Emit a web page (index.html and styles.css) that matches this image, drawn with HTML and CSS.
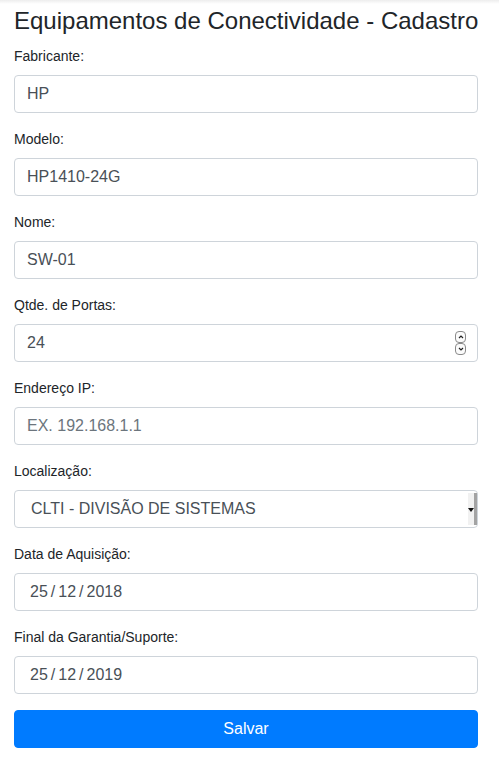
FILE: index.html
```html
<!DOCTYPE html>
<html lang="pt-BR">
<head>
<meta charset="utf-8">
<title>Equipamentos de Conectividade - Cadastro</title>
<link rel="stylesheet" href="styles.css">
</head>
<body>
<div class="page">
  <h3 class="title">Equipamentos de Conectividade - Cadastro</h3>
  <form class="form">
    <div class="group">
      <label class="label" for="fab">Fabricante:</label>
      <input class="control" id="fab" type="text" value="HP">
    </div>
    <div class="group">
      <label class="label" for="mod">Modelo:</label>
      <input class="control" id="mod" type="text" value="HP1410-24G">
    </div>
    <div class="group">
      <label class="label" for="nome">Nome:</label>
      <input class="control" id="nome" type="text" value="SW-01">
    </div>
    <div class="group">
      <label class="label" for="portas">Qtde. de Portas:</label>
      <div class="field">
        <input class="control number" id="portas" type="number" value="24">
        <span class="spinner">
          <span class="spin-btn"><svg viewBox="0 0 8 10" width="8" height="10"><path d="M2 6 L4 4 L6 6" fill="none" stroke="#222" stroke-width="1.2"/></svg></span>
          <span class="spin-btn"><svg viewBox="0 0 8 10" width="8" height="10"><path d="M2 4 L4 6 L6 4" fill="none" stroke="#222" stroke-width="1.2"/></svg></span>
        </span>
      </div>
    </div>
    <div class="group">
      <label class="label" for="ip">Endereço IP:</label>
      <input class="control" id="ip" type="text" placeholder="EX. 192.168.1.1">
    </div>
    <div class="group">
      <label class="label" for="loc">Localização:</label>
      <div class="field">
        <select class="control select" id="loc">
          <option>CLTI - DIVISÃO DE SISTEMAS</option>
        </select>
        <span class="drop"><span class="drop-arrow"></span></span>
      </div>
    </div>
    <div class="group">
      <label class="label">Data de Aquisição:</label>
      <div class="control date"><span>25</span><span class="sep">/</span><span>12</span><span class="sep">/</span><span>2018</span></div>
    </div>
    <div class="group">
      <label class="label">Final da Garantia/Suporte:</label>
      <div class="control date"><span>25</span><span class="sep">/</span><span>12</span><span class="sep">/</span><span>2019</span></div>
    </div>
    <button class="btn" type="button">Salvar</button>
  </form>
</div>
</body>
</html>
```

FILE: styles.css
```css
* { box-sizing: border-box; }

html, body {
  margin: 0;
  padding: 0;
}

body {
  font-family: "Liberation Sans", Arial, sans-serif;
  color: #212529;
  background: #fff linear-gradient(rgba(0,0,0,0.07), rgba(0,0,0,0) 4px) no-repeat;
  font-size: 16px;
  line-height: 1.5;
}

.page {
  width: 464px;
  margin-left: 14px;
  padding-top: 6px;
}

.title {
  font-size: 24px;
  font-weight: 400;
  line-height: 30px;
  margin: 0 0 10px;
  white-space: nowrap;
}

.form {
  margin: 0;
}

.group {
  margin-bottom: 16px;
}

.label {
  display: block;
  font-size: 14px;
  line-height: 21px;
  margin-bottom: 8px;
}

.field {
  position: relative;
}

.control {
  display: block;
  width: 100%;
  height: 38px;
  padding: 6px 12px;
  font-family: inherit;
  font-size: 16px;
  line-height: 24px;
  color: #495057;
  background: #fff;
  border: 1px solid #ced4da;
  border-radius: 4px;
  outline: none;
  margin: 0;
}

.control::placeholder {
  color: #6c757d;
  opacity: 1;
}

.number {
  -moz-appearance: textfield;
  appearance: textfield;
}

.number::-webkit-inner-spin-button,
.number::-webkit-outer-spin-button {
  -webkit-appearance: none;
  margin: 0;
}

.spinner {
  position: absolute;
  right: 12px;
  top: 7px;
  display: flex;
  flex-direction: column;
}

.spin-btn {
  display: flex;
  align-items: center;
  justify-content: center;
  width: 11px;
  height: 12px;
  border: 1px solid #8a8a8a;
  border-radius: 4px;
  background: #fbfbfb;
}

.select {
  -webkit-appearance: none;
  appearance: none;
  padding-left: 16px;
  color: #495057;
}

.drop {
  position: absolute;
  right: 1px;
  top: 3px;
  bottom: 3px;
  width: 9px;
  background: #f1f1f1;
  border-right: 3px solid #a3a3a3;
  display: flex;
  align-items: center;
  justify-content: center;
}

.drop-arrow {
  width: 0;
  height: 0;
  border-left: 3px solid transparent;
  border-right: 3px solid transparent;
  border-top: 4px solid #111;
  margin-top: 1px;
}

.date {
  display: flex;
  align-items: center;
  padding-left: 15px;
}

.sep {
  padding: 0 3px;
}

.btn {
  display: block;
  width: 100%;
  height: 38px;
  margin: 1px 0 0;
  padding: 6px 12px;
  font-family: inherit;
  font-size: 16px;
  line-height: 24px;
  color: #fff;
  background: #007bff;
  border: 1px solid #007bff;
  border-radius: 4px;
  text-align: center;
}
```
